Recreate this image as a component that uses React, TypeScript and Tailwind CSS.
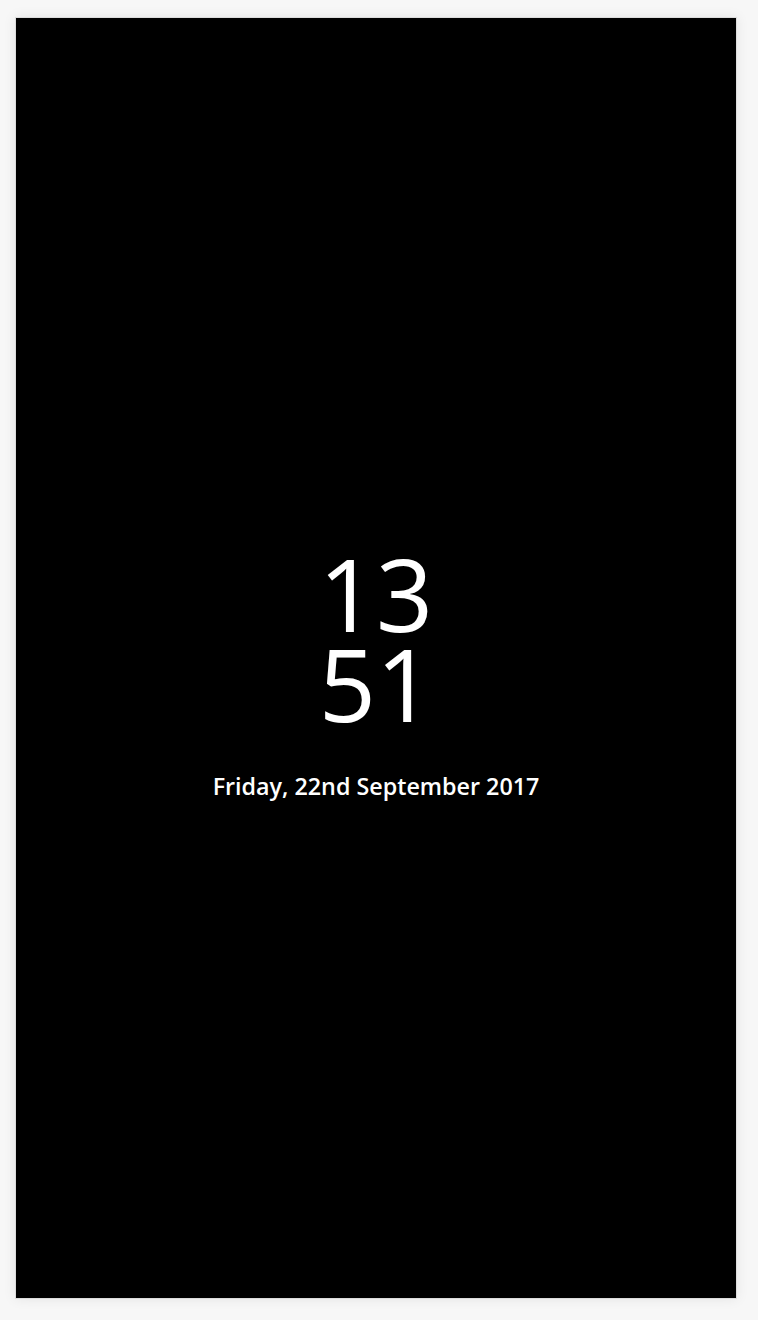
export default function App() {
  return (
    <div className="min-h-[1320px] w-full bg-[#f7f7f7] pl-[15px] pt-[17px]" style={{ fontFamily: '"Open Sans", sans-serif' }}>
      <div className="h-[1282px] w-[722px] border border-[#dcdcdc] bg-black shadow-[0_0_12px_rgba(0,0,0,0.08)] flex flex-col items-center pt-[530px]">
        <div className="text-white text-[100px] leading-[90px] text-center font-normal">
          <div>13</div>
          <div>51</div>
        </div>
        <div className="mt-[42px] text-white text-[23.3px] leading-[32px] font-semibold">Friday, 22nd September 2017</div>
      </div>
    </div>
  );
}
